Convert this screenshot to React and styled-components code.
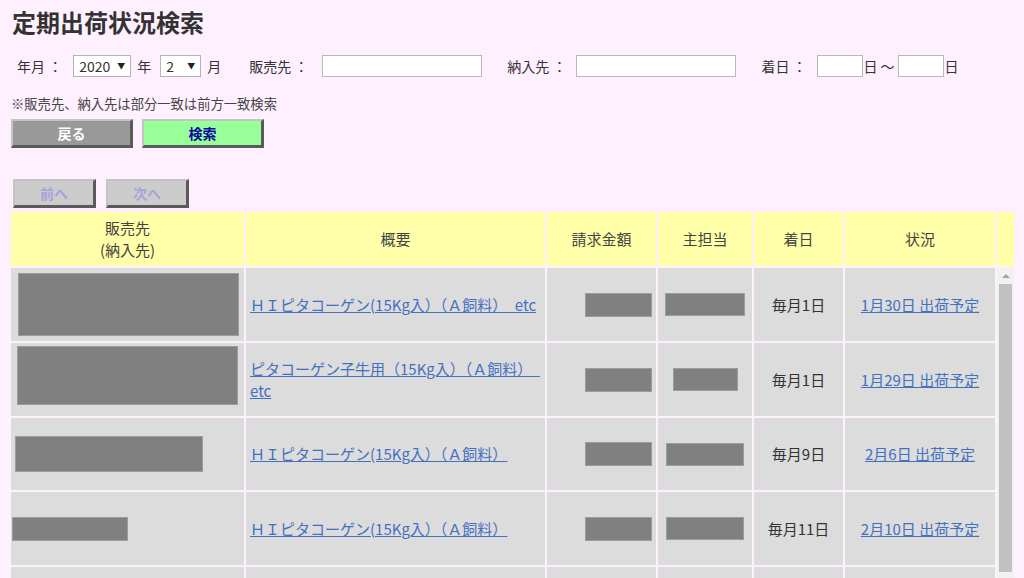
import React from "react";
import styled, { createGlobalStyle } from "styled-components";

const GlobalStyle = createGlobalStyle`
  html, body {
    margin: 0;
    padding: 0;
    background: #fff0ff;
    overflow: hidden;
  }
  body {
    font-family: "Noto Sans CJK JP", "Noto Sans", sans-serif;
    color: #333;
    font-size: 14px;
  }
`;

const Page = styled.div`
  padding: 6px 0 0 11px;
  width: 1013px;
  box-sizing: border-box;
`;

const Title = styled.h1`
  margin: 0 0 0 1px;
  font-size: 24px;
  line-height: 32px;
  font-weight: 700;
  color: #333;
`;

const FormRow = styled.div`
  display: flex;
  align-items: center;
  height: 24px;
  margin-top: 16px;
  padding-left: 6px;
`;

const Label = styled.span`
  margin-left: ${(props) => props.$ml || 0}px;
  white-space: pre;
  line-height: 24px;
`;

const SelectWrap = styled.span`
  position: relative;
  display: inline-block;
  margin-left: ${(props) => props.$ml || 0}px;

  &::after {
    content: "▼";
    position: absolute;
    right: 6px;
    top: 6px;
    font-size: 8px;
    line-height: 10px;
    color: #222;
    pointer-events: none;
  }
`;

const Select = styled.select`
  appearance: none;
  width: ${(props) => props.$w}px;
  height: 22px;
  box-sizing: border-box;
  border: 1px solid #b4b4b4;
  background: #fff;
  padding: 0 0 0 5px;
  font-family: inherit;
  font-size: 14px;
  color: #333;
`;

const Input = styled.input`
  width: ${(props) => props.$w}px;
  height: 22px;
  box-sizing: border-box;
  border: 1px solid #b8b8b8;
  background: #fff;
  margin-left: ${(props) => props.$ml || 0}px;
  padding: 0 3px;
`;

const Note = styled.div`
  margin-top: 17px;
  font-size: 13.3px;
  line-height: 18px;
  color: #444;
`;

const ButtonRow = styled.div`
  display: flex;
  gap: ${(props) => props.$gap || 9}px;
  margin-top: ${(props) => props.$mt || 0}px;
  padding-left: ${(props) => props.$pl || 0}px;
`;

const Button = styled.button`
  width: ${(props) => props.$w || 122}px;
  height: 29px;
  box-sizing: border-box;
  border-style: solid;
  border-width: 2px 3px 3px 2px;
  border-color: #c4c4c4 #5a5a5a #5a5a5a #c4c4c4;
  background: ${(props) => props.$bg};
  color: ${(props) => props.$fg};
  font-family: inherit;
  font-size: 14px;
  font-weight: 700;
  padding: 0;
  cursor: pointer;
`;

const columns = "233px 299px 109px 94px 89px 150px";

const Grid = styled.div`
  display: flex;
  flex-direction: column;
  gap: 2px;
  margin-top: 4px;
  width: 1003px;
`;

const HeadRow = styled.div`
  display: grid;
  grid-template-columns: ${columns} 1fr;
  gap: 2px;
  height: 54px;
`;

const HeadCell = styled.div`
  background: #ffffaa;
  display: flex;
  align-items: center;
  justify-content: center;
  text-align: center;
  line-height: 22px;
  font-size: 15px;
  color: #444;
`;

const Body = styled.div`
  display: flex;
  gap: 2px;
  height: 330px;
  overflow: hidden;
`;

const Rows = styled.div`
  display: flex;
  flex-direction: column;
  gap: 2px;
  width: 984px;
  flex: none;
`;

const Row = styled.div`
  display: grid;
  grid-template-columns: ${columns};
  gap: 2px;
  flex: none;
  height: ${(props) => props.$h || 73}px;
`;

const Cell = styled.div`
  background: #dcdcdc;
  display: flex;
  align-items: center;
  justify-content: ${(props) => props.$justify || "center"};
  padding: ${(props) => props.$pad || "0"};
  font-size: 15px;
  line-height: 22px;
  color: #333;
`;

const Link = styled.a`
  color: #4470c0;
  text-decoration: underline;
  cursor: pointer;
`;

const Redacted = styled.span`
  display: inline-block;
  flex: none;
  width: ${(props) => props.$w}px;
  height: ${(props) => props.$h}px;
  background: #808080;
  border: 1px solid #9c9c9c;
  box-sizing: border-box;
  margin: ${(props) => props.$m || "0"};
`;

const ScrollTrack = styled.div`
  width: 17px;
  flex: none;
  background: #f1f1f1;
  display: flex;
  flex-direction: column;
  align-items: center;
`;

const ScrollArrow = styled.div`
  height: 16px;
  width: 100%;
  display: flex;
  align-items: center;
  justify-content: center;

  &::before {
    content: "";
    width: 0;
    height: 0;
    border-left: 4px solid transparent;
    border-right: 4px solid transparent;
    border-bottom: 4px solid #a3a3a3;
  }
`;

const ScrollThumb = styled.div`
  width: 13px;
  height: 288px;
  background: #c1c1c1;
`;

const rows = [
  {
    client: { w: 221, h: 63, m: "0 0 0 1px" },
    summary: "ＨＩピタコーゲン(15Kg入）（Ａ飼料）　etc",
    amount: 67,
    staff: 80,
    day: "毎月1日",
    status: "1月30日 出荷予定",
  },
  {
    client: { w: 221, h: 59, m: "-8px 0 0 0" },
    summary: "ピタコーゲン子牛用（15Kg入）（Ａ飼料）　etc",
    amount: 67,
    staff: 65,
    day: "毎月1日",
    status: "1月29日 出荷予定",
  },
  {
    client: { w: 188, h: 36, m: "0 0 0 -2px" },
    summary: "ＨＩピタコーゲン(15Kg入）（Ａ飼料）",
    amount: 67,
    staff: 78,
    day: "毎月9日",
    status: "2月6日 出荷予定",
  },
  {
    client: { w: 116, h: 24, m: "0 0 0 -5px" },
    summary: "ＨＩピタコーゲン(15Kg入）（Ａ飼料）",
    amount: 67,
    staff: 78,
    day: "毎月11日",
    status: "2月10日 出荷予定",
  },
];

export default function App() {
  return (
    <>
      <GlobalStyle />
      <Page>
        <Title>定期出荷状況検索</Title>

        <FormRow>
          <Label>年月 ：</Label>
          <SelectWrap $ml={11}>
            <Select $w={58} defaultValue="2020">
              <option>2019</option>
              <option>2020</option>
              <option>2021</option>
            </Select>
          </SelectWrap>
          <Label $ml={6}>年</Label>
          <SelectWrap $ml={9}>
            <Select $w={41} defaultValue="2">
              {Array.from({ length: 12 }, (_, i) => (
                <option key={i}>{i + 1}</option>
              ))}
            </Select>
          </SelectWrap>
          <Label $ml={6}>月</Label>

          <Label $ml={28}>販売先 ：</Label>
          <Input $ml={14} $w={160} />

          <Label $ml={25}>納入先 ：</Label>
          <Input $ml={10} $w={160} />

          <Label $ml={25}>着日 ：</Label>
          <Input $ml={10} $w={46} />
          <Label $ml={1}>日</Label>
          <Label $ml={3}>～</Label>
          <Input $ml={3} $w={46} />
          <Label $ml={1}>日</Label>
        </FormRow>

        <Note>※販売先、納入先は部分一致は前方一致検索</Note>

        <ButtonRow $mt={6}>
          <Button $bg="#999999" $fg="#ffffff">戻る</Button>
          <Button $bg="#99ff99" $fg="#0a0aa0">検索</Button>
        </ButtonRow>

        <ButtonRow $mt={31} $pl={2} $gap={10}>
          <Button $w={83} $bg="#cccccc" $fg="#a4a4dc">前へ</Button>
          <Button $w={83} $bg="#cccccc" $fg="#a4a4dc">次へ</Button>
        </ButtonRow>

        <Grid>
          <HeadRow>
            <HeadCell>
              販売先
              <br />
              (納入先)
            </HeadCell>
            <HeadCell>概要</HeadCell>
            <HeadCell>請求金額</HeadCell>
            <HeadCell>主担当</HeadCell>
            <HeadCell>着日</HeadCell>
            <HeadCell>状況</HeadCell>
            <HeadCell />
          </HeadRow>

          <Body>
            <Rows>
              {rows.map((r, i) => (
                <Row key={i} $h={i === 2 ? 72 : 73}>
                  <Cell $justify="flex-start" $pad="0 0 0 6px">
                    <Redacted $w={r.client.w} $h={r.client.h} $m={r.client.m} />
                  </Cell>
                  <Cell $justify="flex-start" $pad="0 6px 0 4px">
                    <Link>{r.summary}</Link>
                  </Cell>
                  <Cell $justify="flex-end" $pad="0 4px 0 0">
                    <Redacted $w={r.amount} $h={24} />
                  </Cell>
                  <Cell>
                    <Redacted $w={r.staff} $h={23} />
                  </Cell>
                  <Cell>{r.day}</Cell>
                  <Cell>
                    <Link>{r.status}</Link>
                  </Cell>
                </Row>
              ))}
              <Row>
                <Cell />
                <Cell />
                <Cell />
                <Cell />
                <Cell />
                <Cell />
              </Row>
            </Rows>
            <ScrollTrack>
              <ScrollArrow />
              <ScrollThumb />
            </ScrollTrack>
          </Body>
        </Grid>
      </Page>
    </>
  );
}
